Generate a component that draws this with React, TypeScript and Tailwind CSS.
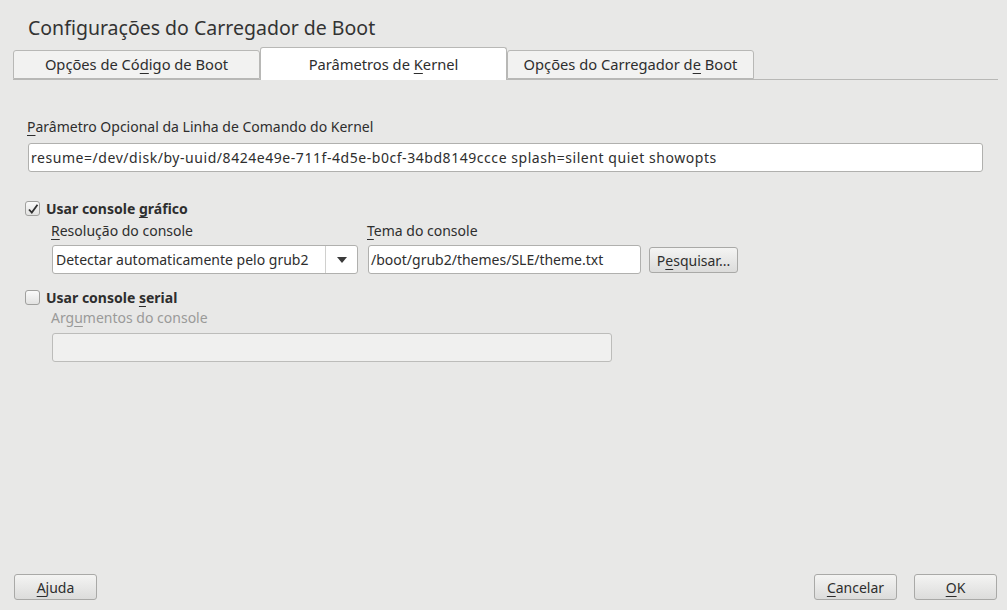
import React from "react";

const font = { fontFamily: '"Noto Sans", "Open Sans", sans-serif' };

function U({ children }: { children: React.ReactNode }) {
  return <span className="underline underline-offset-[3px] decoration-1">{children}</span>;
}

function Tab({ active, children }: { active?: boolean; children: React.ReactNode }) {
  if (active) {
    return (
      <div className="w-[247px] h-[33px] -mb-px bg-white border border-b-0 border-[#b8b8b6] rounded-t-[3px] flex items-center justify-center text-[14.7px] text-[#2e2e2e] relative z-10 pt-[1px]">
        <span>{children}</span>
      </div>
    );
  }
  return (
    <div className="w-[247px] h-[29px] bg-[#f2f2f1] border border-[#b8b8b6] rounded-t-[3px] flex items-center justify-center text-[14.7px] text-[#2e2e2e]">
      <span>{children}</span>
    </div>
  );
}

function Button({ children, className = "" }: { children: React.ReactNode; className?: string }) {
  return (
    <button
      className={`h-[26px] w-[83px] rounded-[3px] border border-[#a9a9a7] bg-gradient-to-b from-[#f4f4f3] to-[#dcdcdb] text-[14px] text-[#2e2e2e] flex items-center justify-center ${className}`}
    >
      <span>{children}</span>
    </button>
  );
}

function Checkbox({ checked }: { checked?: boolean }) {
  return (
    <div className="w-[15px] h-[15px] rounded-[3px] border border-[#a0a09e] bg-gradient-to-b from-[#fafafa] to-[#e2e2e1] flex items-center justify-center">
      {checked && (
        <svg width="12" height="12" viewBox="0 0 12 12">
          <path d="M2 6.5 L4.8 9.5 L10.5 1.8" fill="none" stroke="#303030" strokeWidth="1.8" />
        </svg>
      )}
    </div>
  );
}

export default function App() {
  return (
    <div style={font} className="w-[1007px] h-[610px] bg-[#e8e8e7] flex flex-col text-[#2e2e2e] overflow-hidden">
      <div className="pl-[28px] pt-[13px] h-[47px] text-[19.5px] text-[#333]">Configurações do Carregador de Boot</div>

      <div className="flex items-end pl-[13px] pr-[9px]">
        <div className="flex items-end border-b border-[#b8b8b6] w-full">
          <Tab>
            Opções de Có<U>d</U>igo de Boot
          </Tab>
          <Tab active>
            Parâmetros de <U>K</U>ernel
          </Tab>
          <Tab>
            Opções do Carregador d<U>e</U> Boot
          </Tab>
        </div>
      </div>

      <div className="flex-1 flex flex-col pl-[27px] pt-[37px]">
        <div className="text-[14px] leading-[20px]">
          <U>P</U>arâmetro Opcional da Linha de Comando do Kernel
        </div>
        <div className="mt-[6px] ml-[1px] w-[955px] h-[29px] bg-white border border-[#b0b0ae] rounded-[3px] flex items-center pl-[2px] text-[14px] tracking-[0.55px]">
          resume=/dev/disk/by-uuid/8424e49e-711f-4d5e-b0cf-34bd8149ccce splash=silent quiet showopts
        </div>

        <div className="mt-[28px] -ml-[2px] flex items-center gap-[6px] h-[17px]">
          <Checkbox checked />
          <span className="text-[14px] font-bold">
            Usar console <U>g</U>ráfico
          </span>
        </div>

        <div className="flex pl-[24px] mt-[4px]">
          <div className="flex flex-col w-[316px]">
            <div className="text-[14px] leading-[20px]">
              <U>R</U>esolução do console
            </div>
            <div className="mt-[4px] ml-[1px] w-[306px] h-[29px] bg-white border border-[#b0b0ae] rounded-[3px] flex items-center text-[14px]">
              <span className="flex-1 pl-[3px]">Detectar automaticamente pelo grub2</span>
              <div className="w-[32px] h-full border-l border-[#d0d0ce] flex items-center justify-center">
                <svg width="10" height="6" viewBox="0 0 10 6">
                  <path d="M0 0 H10 L5 6 Z" fill="#3a3a3a" />
                </svg>
              </div>
            </div>
          </div>
          <div className="flex flex-col">
            <div className="text-[14px] leading-[20px]">
              <U>T</U>ema do console
            </div>
            <div className="mt-[4px] flex items-center">
              <div className="ml-[1px] w-[273px] h-[29px] bg-white border border-[#b0b0ae] rounded-[3px] flex items-center pl-[2px] text-[14px]">
                /boot/grub2/themes/SLE/theme.txt
              </div>
              <Button className="ml-[8px] w-[89px] h-[25px] mt-[1px]">
                P<U>e</U>squisar...
              </Button>
            </div>
          </div>
        </div>

        <div className="mt-[15px] -ml-[2px] flex items-center gap-[6px] h-[17px]">
          <Checkbox />
          <span className="text-[14px] font-bold">
            Usar console <U>s</U>erial
          </span>
        </div>
        <div className="pl-[24px] mt-[2px] text-[14px] leading-[20px] text-[#9a9a99]">
          Arg<U>u</U>mentos do console
        </div>
        <div className="mt-[5px] ml-[25px] w-[560px] h-[29px] bg-[#f0f0ef] border border-[#bcbcba] rounded-[3px]" />
      </div>

      <div className="flex items-center justify-between pl-[14px] pr-[10px] pb-[10px]">
        <Button>
          <U>A</U>juda
        </Button>
        <div className="flex gap-[17px]">
          <Button>
            <U>C</U>ancelar
          </Button>
          <Button>
            <U>O</U>K
          </Button>
        </div>
      </div>
    </div>
  );
}
